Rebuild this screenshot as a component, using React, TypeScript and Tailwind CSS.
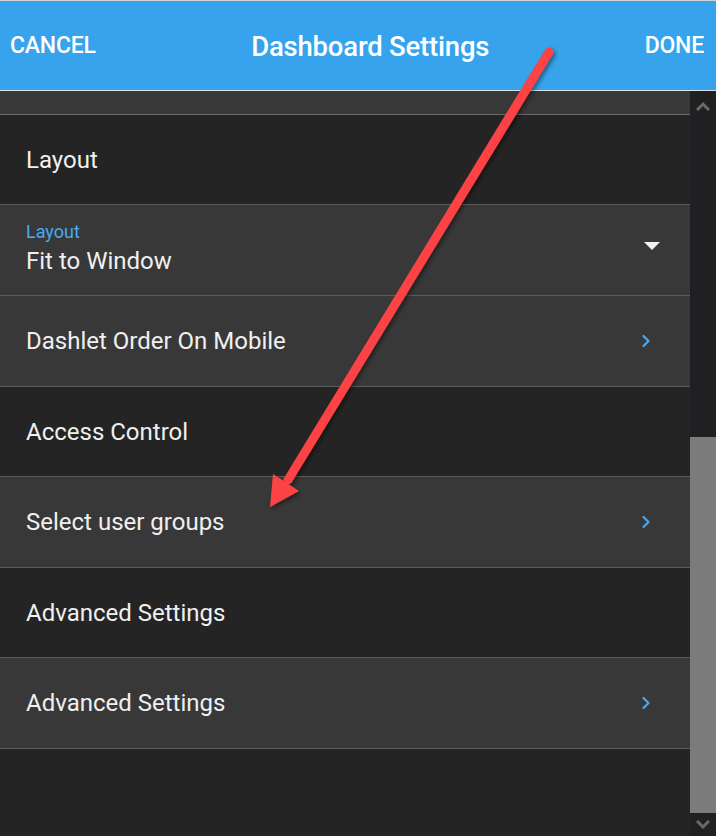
import { ChevronRight } from 'lucide-react';

type Row = { label: string; kind: 'section' | 'link' | 'select'; sub?: string; h: string };

const rows: Row[] = [
  { label: 'Layout', kind: 'section', h: 'h-[90px]' },
  { label: 'Fit to Window', kind: 'select', sub: 'Layout', h: 'h-[91px]' },
  { label: 'Dashlet Order On Mobile', kind: 'link', h: 'h-[91px]' },
  { label: 'Access Control', kind: 'section', h: 'h-[90px]' },
  { label: 'Select user groups', kind: 'link', h: 'h-[91px]' },
  { label: 'Advanced Settings', kind: 'section', h: 'h-[90px]' },
  { label: 'Advanced Settings', kind: 'link', h: 'h-[91px]' },
];

const App = () => {
  return (
    <div
      className="relative w-[716px] h-[836px] overflow-hidden bg-[#242424] flex flex-col"
      style={{ fontFamily: 'Roboto, "Liberation Sans", sans-serif' }}
    >
      {/* Header */}
      <header className="h-[91px] shrink-0 bg-[#36a3ec] border-t border-b border-t-[#cfd3d6] border-b-[#dde3e7] flex items-center justify-between px-[10px] text-white">
        <span className="text-[23px] font-medium tracking-[-0.2px] pt-[1px]">CANCEL</span>
        <span className="text-[27.5px] font-medium tracking-[-0.2px] pt-[2px]">Dashboard Settings</span>
        <span className="text-[23px] font-medium tracking-[-0.2px] pt-[1px] pr-[2px]">DONE</span>
      </header>

      <div className="flex flex-1 min-h-0">
        {/* List */}
        <div className="flex-1 flex flex-col">
          <div className="h-[24px] shrink-0 bg-[#383838] border-b border-[#6a6a6a]" />
          {rows.map((row, i) => (
            <div
              key={i}
              className={`${row.h} shrink-0 border-b border-[#5c5c5c] flex items-center justify-between pl-[26px] pr-[38px] ${
                row.kind === 'section' ? 'bg-[#242424]' : 'bg-[#383838]'
              }`}
            >
              {row.kind === 'select' ? (
                <div className="flex flex-col mt-[-3px]">
                  <span className="text-[18px] leading-[22px] text-[#45abf2]">{row.sub}</span>
                  <span className="text-[24px] leading-[32px] text-[#f0f0f0] mt-[2px]">{row.label}</span>
                </div>
              ) : (
                <span className="text-[24px] text-[#f0f0f0]">{row.label}</span>
              )}
              {row.kind === 'link' && <ChevronRight className="w-[20px] h-[20px] text-[#4aa8f2] mr-[-4px]" strokeWidth={2.6} />}
              {row.kind === 'select' && (
                <div className="w-0 h-0 border-l-[8px] border-r-[8px] border-t-[8px] border-l-transparent border-r-transparent border-t-[#f2f2f2] mr-[-8px] mt-[-8px]" />
              )}
            </div>
          ))}
        </div>

        {/* Scrollbar */}
        <div className="w-[26px] bg-[#202022] flex flex-col">
          <div className="h-[30px] flex items-center justify-center">
            <svg width="14" height="10" viewBox="0 0 14 10">
              <path d="M1 9 L7 3 L13 9" fill="none" stroke="#6a6a6a" strokeWidth="3" />
            </svg>
          </div>
          <div className="h-[316px]" />
          <div className="flex-1 bg-[#7b7b7b]" />
          <div className="h-[23px] flex items-center justify-center">
            <svg width="14" height="10" viewBox="0 0 14 10">
              <path d="M1 1 L7 7 L13 1" fill="none" stroke="#6a6a6a" strokeWidth="3" />
            </svg>
          </div>
        </div>
      </div>

      {/* Annotation arrow */}
      <svg className="absolute inset-0 pointer-events-none" width="716" height="836" viewBox="0 0 716 836">
        <defs>
          <filter id="sh" x="-20%" y="-20%" width="140%" height="140%">
            <feDropShadow dx="2" dy="2" stdDeviation="2" floodColor="#000" floodOpacity="0.45" />
          </filter>
        </defs>
        <g filter="url(#sh)">
          <line x1="549" y1="52" x2="288" y2="480" stroke="#fb4245" strokeWidth="9" strokeLinecap="round" />
          <polygon points="270,507 273,474 299,491" fill="#fb4245" />
        </g>
      </svg>
    </div>
  );
};

export default App;
